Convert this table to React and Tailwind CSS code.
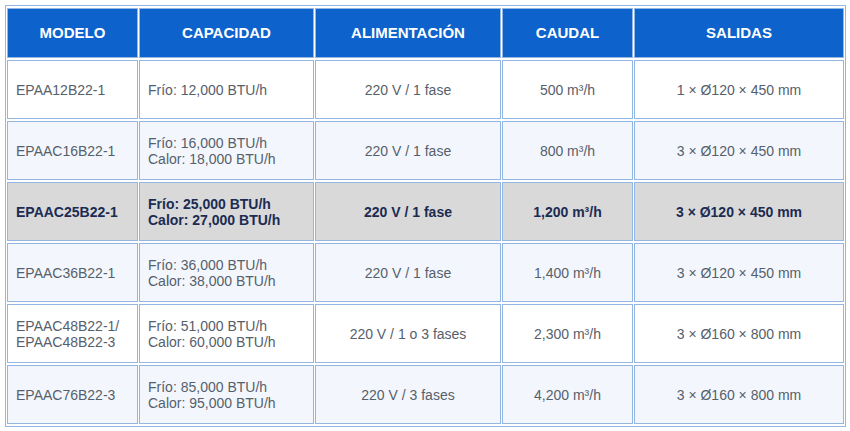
import React from "react";

const rows = [
  { m: ["EPAA12B22-1"], c: ["Frío: 12,000 BTU/h"], a: "220 V / 1 fase", q: "500 m³/h", s: "1 × Ø120 × 450 mm", bg: "bg-white" },
  { m: ["EPAAC16B22-1"], c: ["Frío: 16,000 BTU/h", "Calor: 18,000 BTU/h"], a: "220 V / 1 fase", q: "800 m³/h", s: "3 × Ø120 × 450 mm", bg: "bg-[#f3f7fd]" },
  { m: ["EPAAC25B22-1"], c: ["Frío: 25,000 BTU/h", "Calor: 27,000 BTU/h"], a: "220 V / 1 fase", q: "1,200 m³/h", s: "3 × Ø120 × 450 mm", bg: "bg-[#d9d9d9]", hl: true },
  { m: ["EPAAC36B22-1"], c: ["Frío: 36,000 BTU/h", "Calor: 38,000 BTU/h"], a: "220 V / 1 fase", q: "1,400 m³/h", s: "3 × Ø120 × 450 mm", bg: "bg-[#f3f7fd]" },
  { m: ["EPAAC48B22-1/", "EPAAC48B22-3"], c: ["Frío: 51,000 BTU/h", "Calor: 60,000 BTU/h"], a: "220 V / 1 o 3 fases", q: "2,300 m³/h", s: "3 × Ø160 × 800 mm", bg: "bg-white" },
  { m: ["EPAAC76B22-3"], c: ["Frío: 85,000 BTU/h", "Calor: 95,000 BTU/h"], a: "220 V / 3 fases", q: "4,200 m³/h", s: "3 × Ø160 × 800 mm", bg: "bg-[#f3f7fd]" },
];

const heads = [
  ["MODELO", "w-[131px]"],
  ["CAPACIDAD", "w-[175px]"],
  ["ALIMENTACIÓN", "w-[186px]"],
  ["CAUDAL", "w-[131px]"],
  ["SALIDAS", "w-[210px]"],
];

export default function App() {
  return (
    <div className="w-[850px] h-[431px] bg-white pt-[5px] pl-[5px] font-['Liberation_Sans',Arial,sans-serif]">
      <table className="table-fixed w-[841px] border-separate border-spacing-x-px border-spacing-y-0.5 border border-[#93b6e2]">
        <thead>
          <tr className="h-[50px]">
            {heads.map(([t, w]) => (
              <th
                key={t}
                className={`${w} border border-[#93b6e2] bg-[#0d62cc] text-white text-[15px] font-bold text-center align-middle p-0`}
              >
                {t}
              </th>
            ))}
          </tr>
        </thead>
        <tbody>
          {rows.map((r, i) => {
            const txt = r.hl ? "font-bold text-[#1b2b52]" : "text-[#56606b]";
            const cell = `border border-[#93b6e2] ${r.bg} ${txt} text-[14px] leading-4 align-middle`;
            return (
              <tr key={i} className="h-[59px]">
                <td className={`${cell} pl-2 text-left`}>
                  {r.m.map((l) => (
                    <div key={l}>{l}</div>
                  ))}
                </td>
                <td className={`${cell} pl-2 text-left`}>
                  {r.c.map((l) => (
                    <div key={l}>{l}</div>
                  ))}
                </td>
                <td className={`${cell} text-center`}>{r.a}</td>
                <td className={`${cell} text-center`}>{r.q}</td>
                <td className={`${cell} text-center`}>{r.s}</td>
              </tr>
            );
          })}
        </tbody>
      </table>
    </div>
  );
}
